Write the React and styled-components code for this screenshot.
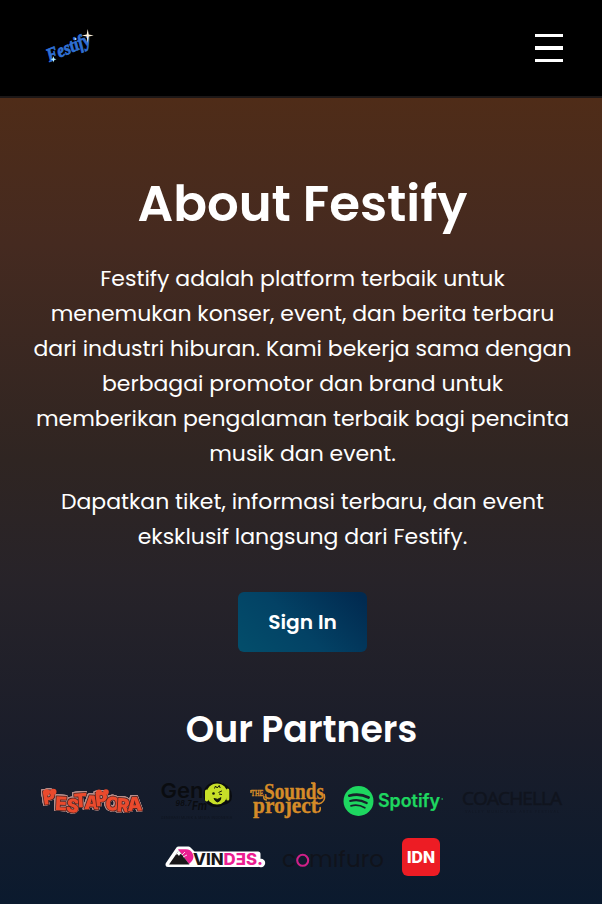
import React from "react";
import styled, { createGlobalStyle } from "styled-components";

const GlobalStyle = createGlobalStyle`
  * { box-sizing: border-box; }
  body { margin: 0; background: #0b1a2d; }
`;

const Page = styled.div`
  display: flex;
  flex-direction: column;
  height: 904px;
  overflow: hidden;
  color: #fff;
  font-family: Poppins, Inter, sans-serif;
`;

const Header = styled.header`
  display: flex;
  align-items: center;
  justify-content: space-between;
  flex: 0 0 98px;
  padding: 0 39px 0 40px;
  background: #000;
  border-bottom: 2px solid #1c1717;
`;

const MenuButton = styled.button`
  display: flex;
  flex-direction: column;
  gap: 9px;
  padding: 0;
  border: 0;
  background: none;
`;

const MenuBar = styled.span`
  width: 28px;
  height: ${(p) => p.$thickness}px;
  background: #fff;
`;

const About = styled.main`
  flex: 1;
  display: flex;
  flex-direction: column;
  align-items: center;
  padding: 76px 28px 0 31px;
  background: linear-gradient(180deg, #4f2c18 0%, #452a20 18%, #2f2522 45%, #272329 60%, #1a1d2a 80%, #0b1a2e 100%);
`;

const Title = styled.h1`
  margin: 0 0 27px;
  font-size: 49.8px;
  font-weight: 600;
  line-height: 60px;
`;

const Paragraph = styled.p`
  margin: 0 0 ${(p) => p.$gap}px;
  font-size: 21.97px;
  line-height: 35px;
  text-align: center;
`;

const SignIn = styled.button`
  width: 129px;
  height: 60px;
  padding: 0;
  border: 0;
  border-radius: 6px;
  color: #fff;
  background: linear-gradient(45deg, #034e6b 0%, #034265 45%, #012a50 95%);
  font: inherit;
  font-size: 20.2px;
  font-weight: 600;
`;

const PartnersTitle = styled.h2`
  margin: 56px 2px 28px 0;
  font-size: 36.2px;
  font-weight: 600;
  line-height: 44px;
`;

const Partners = styled.div`
  display: flex;
  flex-wrap: wrap;
  justify-content: center;
  gap: 17px 18px;
  width: 540px;
  padding-right: 2px;
`;

const Logo = styled.svg`
  display: block;
  flex: none;
  overflow: visible;
  font-family: ${(p) => p.$font || "Inter, sans-serif"};
`;

const PuffyText = styled.text`
  fill: #ea4a2d;
  stroke: #4b211f;
  stroke-width: 1.5px;
  stroke-linejoin: round;
  paint-order: stroke;
  font: 900 19px Inter, sans-serif;
  filter: drop-shadow(0.6px 0 0 #b78f8b) drop-shadow(-0.6px 0 0 #b78f8b) drop-shadow(0 0.6px 0 #b78f8b)
    drop-shadow(0 -0.6px 0 #b78f8b);
`;

const DISPLAY = '"Liberation Serif", serif';

function FestifyLogo() {
  return (
    <Logo width="60" height="50" viewBox="40 22 60 50">
      <g transform="rotate(-23 50 62)">
        <text x="50" y="61" textLength="46" lengthAdjust="spacingAndGlyphs" fontFamily={DISPLAY}
          fontSize="19" fontWeight="700" fontStyle="italic" fill="#2f6fd2" stroke="#2f6fd2" strokeWidth=".8">Festify</text>
      </g>
      <path d="M87.7 28l1 5.5 5 1-5 1-1 6.5-1-6.5-5-1 5-1z" fill="#fff3dc" />
      <path d="M53.5 55l.7 2.6 2.3.7-2.3.7-.7 2.6-.7-2.6-2.3-.7 2.3-.7z" fill="#b9f2ff" />
      <circle cx="75.5" cy="38" r="1" fill="#b9dcff" />
    </Logo>
  );
}

function PestaporaLogo() {
  return (
    <Logo width="102" height="40" viewBox="0 0 102 40">
      <PuffyText x="3 14 24.5 33.5 43 55 64 75.5 86.5" y="25 30 31.5 27.5 29 26.5 30 31.5 31" rotate="-9 3 8 -4 2 -6 4 4 -2">
        PESTAPORA
      </PuffyText>
      <g fill="#ea4a2d">
        <circle cx="5.5" cy="12.5" r="3.2" />
        <circle cx="12.5" cy="11.8" r="3" />
        <circle cx="58" cy="12.5" r="3" />
        <circle cx="65" cy="12" r="2.8" />
      </g>
    </Logo>
  );
}

function GenFmLogo() {
  return (
    <Logo width="72" height="40" viewBox="0 0 72 40">
      <g fill="#0a0c10">
        <text x="-0.5" y="18" fontSize="20.5" fontWeight="600" textLength="43" lengthAdjust="spacingAndGlyphs">Gen</text>
        <circle cx="55" cy="14.5" r="12.6" />
        <path d="M62 3q9 5 9 13 0 8-9 9z" />
        <text x="14.5" y="25.5" fontSize="7" fontWeight="700" fontStyle="italic" textLength="16">98.7</text>
        <text x="31" y="30.3" fontSize="11.5" fontWeight="700" fontStyle="italic" textLength="15" lengthAdjust="spacingAndGlyphs">Fm</text>
        <text x="0" y="39" fontSize="3.4" opacity=".5" textLength="71">GENERASI MUSIK &amp; MEDIA INDONESIA</text>
      </g>
      <circle cx="56" cy="14" r="10.6" fill="#c7df28" />
      <rect x="44" y="9.5" width="3.4" height="12" rx="1.7" fill="#c7df28" />
      <rect x="65.3" y="8.5" width="3" height="12" rx="1.5" fill="#c7df28" />
      <g fill="none" stroke="#11140b" strokeWidth="1">
        <path d="M53.5 8.5l1-2.5 1.7 2 2-2.5 1 2.5M57.5 12.5l3.4-1.6M58 14l3 .6" />
        <path d="M53 18.5q3.5 2 7-.8-.8 4-3.5 4.2-2.3-.6-3.5-3.4z" fill="#11140b" />
      </g>
      <circle cx="52.5" cy="13.5" r="1.3" fill="#11140b" />
    </Logo>
  );
}

function SoundsProjectLogo() {
  return (
    <Logo width="75" height="40" viewBox="0 0 75 40">
      <g fill="#d58b28" stroke="#d58b28" strokeWidth=".35" fontFamily={DISPLAY} fontWeight="700">
        <text x="0" y="15.5" fontSize="9" textLength="12.5" lengthAdjust="spacingAndGlyphs">THE</text>
        <text x="13" y="18.7" fontSize="23" textLength="60" lengthAdjust="spacingAndGlyphs">Sounds</text>
        <text x="2" y="33" fontSize="23" textLength="65" lengthAdjust="spacingAndGlyphs">project</text>
      </g>
      <path d="M13 16q-1 4 3 4M73 14q2 6-3 9-5 2-6-1M67 32q3-1 2-5M0 10v3M60 3h4" fill="none" stroke="#d58b28" strokeWidth="1.5" />
    </Logo>
  );
}

function SpotifyLogo() {
  return (
    <Logo width="100" height="40" viewBox="0 0 100 40">
      <circle cx="14.5" cy="21" r="15" fill="#1ed760" />
      <g fill="none" stroke="#18212b" strokeLinecap="round">
        <path d="M5.3 15.7q10-2.9 19.3 1.8" strokeWidth="2.7" />
        <path d="M6.2 21q8.6-2.4 16.5 2" strokeWidth="2.2" />
        <path d="M7 25.8q7.3-1.8 13.8 1.9" strokeWidth="1.8" />
      </g>
      <text x="34" y="27.3" fontSize="18" fontWeight="600" fill="#1ed760" stroke="#1ed760" strokeWidth=".25"
        textLength="62" lengthAdjust="spacingAndGlyphs">Spotify</text>
      <circle cx="98.2" cy="19" r=".9" fill="#1b8c4b" />
    </Logo>
  );
}

function CoachellaLogo() {
  return (
    <Logo width="100" height="40" viewBox="0 0 100 40">
      <g fill="#10141e">
        <text x="0" y="25" fontSize="19" textLength="100" fontFamily='"Open Sans", sans-serif' stroke="#10141e" strokeWidth=".5">COACHELLA</text>
        <text x="3" y="33" fontSize="3.6" opacity=".6" textLength="94">VALLEY MUSIC AND ARTS FESTIVAL</text>
      </g>
    </Logo>
  );
}

function VindesLogo() {
  return (
    <Logo width="101" height="40" viewBox="0 0 101 40">
      <path d="M4 27.5L14.5 12h10l5 5H94v10.5z" fill="#fff" stroke="#fff" strokeWidth="5" strokeLinejoin="round" />
      <circle cx="97" cy="26" r="4.2" fill="#fff" />
      <path d="M14 12.2h7.5a7.5 7.5 0 0 1 5.8 12.6L25 27z" fill="#ec1e91" />
      <path d="M5 27.5l9.8-14 10.7 14z" fill="#191719" />
      <path d="M12 17.5l2.8-4 3.2 4.2-1.8-.7-1.2 2-1.4-1.8z" fill="#fff" />
      <path d="M18 18l3-3M19 20l4-2" stroke="#fff" strokeWidth=".8" />
      <text x="29" y="27.8" fontSize="16" fontWeight="800" fill="#191719" textLength="70" lengthAdjust="spacingAndGlyphs">
        VIN<tspan fill="#ec1e91">DƎS.</tspan>
      </text>
    </Logo>
  );
}

function ComifuroLogo() {
  return (
    <Logo width="101" height="40" viewBox="0 0 101 40" $font="Poppins, Inter, sans-serif">
      <g fill="#10131b">
        <text x="-1" y="29.5" fontSize="23.5" textLength="14" lengthAdjust="spacingAndGlyphs">c</text>
        <text x="26" y="29.5" fontSize="23.5" textLength="75" lengthAdjust="spacingAndGlyphs">mıfuro</text>
      </g>
      <circle cx="19.7" cy="23.3" r="5.5" fill="none" stroke="#cf2088" strokeWidth="2.1" />
    </Logo>
  );
}

function IdnLogo() {
  return (
    <Logo width="38" height="40" viewBox="0 0 38 40">
      <rect y="1" width="38" height="38" rx="6" fill="#ed1c24" />
      <text x="5" y="26" fontSize="15.5" fontWeight="800" fill="#fff" textLength="28" lengthAdjust="spacingAndGlyphs">IDN</text>
    </Logo>
  );
}

export default function App() {
  return (
    <Page>
      <GlobalStyle />
      <Header>
        <FestifyLogo />
        <MenuButton aria-label="Menu">
          <MenuBar $thickness={3} />
          <MenuBar $thickness={4} />
          <MenuBar $thickness={3} />
        </MenuButton>
      </Header>
      <About>
        <Title>About Festify</Title>
        <Paragraph $gap={13}>
          Festify adalah platform terbaik untuk menemukan konser, event, dan berita terbaru dari industri hiburan. Kami
          bekerja sama dengan berbagai promotor dan brand untuk memberikan pengalaman terbaik bagi pencinta musik dan
          event.
        </Paragraph>
        <Paragraph $gap={38}>
          Dapatkan tiket, informasi terbaru, dan event eksklusif langsung dari Festify.
        </Paragraph>
        <SignIn>Sign In</SignIn>
        <PartnersTitle>Our Partners</PartnersTitle>
        <Partners>
          <PestaporaLogo />
          <GenFmLogo />
          <SoundsProjectLogo />
          <SpotifyLogo />
          <CoachellaLogo />
          <VindesLogo />
          <ComifuroLogo />
          <IdnLogo />
        </Partners>
      </About>
    </Page>
  );
}
